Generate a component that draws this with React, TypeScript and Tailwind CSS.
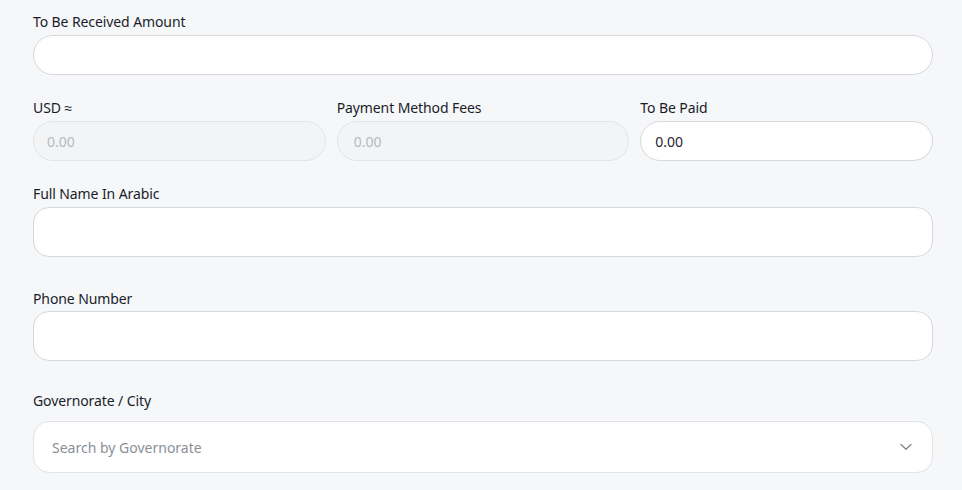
import React from "react";

const font = { fontFamily: '"Noto Sans", "Liberation Sans", sans-serif' };

function Label({ children }: { children: React.ReactNode }) {
  return (
    <label className="block h-5 overflow-visible text-[14px] leading-[22px] font-normal text-[#1a1d29] tracking-[-0.1px]">
      {children}
    </label>
  );
}

export default function App() {
  return (
    <div
      className="min-h-[490px] w-full bg-[#f6f7f9] pl-[33px] pr-[29px] pt-[11px]"
      style={font}
    >
      <div className="flex flex-col">
        {/* Amount to receive */}
        <div>
          <Label>To Be Received Amount</Label>
          <input
            className="mt-1 h-10 w-full rounded-[20px] border border-[#d5d7dc] bg-white px-[14px] text-[14px] outline-none"
            type="text"
          />
        </div>

        {/* Conversion row */}
        <div className="mt-[22px] grid grid-cols-3 gap-x-[11px]">
          <div>
            <Label>USD ≈</Label>
            <input
              disabled
              placeholder="0.00"
              className="mt-1 h-10 w-full rounded-[20px] border border-[#e3e4e8] bg-[#f3f4f6] px-[13px] text-[14px] text-[#b6b9be] placeholder-[#b6b9be] outline-none"
            />
          </div>
          <div>
            <Label>Payment Method Fees</Label>
            <input
              disabled
              placeholder="0.00"
              className="mt-1 h-10 w-full rounded-[20px] border border-[#e3e4e8] bg-[#f3f4f6] px-[16px] text-[14px] text-[#b6b9be] placeholder-[#b6b9be] outline-none"
            />
          </div>
          <div>
            <Label>To Be Paid</Label>
            <input
              defaultValue="0.00"
              className="mt-1 h-10 w-full rounded-[20px] border border-[#d5d7dc] bg-white px-[14px] text-[14px] text-[#1f2230] outline-none"
            />
          </div>
        </div>

        {/* Full name */}
        <div className="mt-[22px]">
          <Label>Full Name In Arabic</Label>
          <input
            className="mt-1 h-[50px] w-full rounded-2xl border border-[#d5d7dc] bg-white px-4 text-[14px] outline-none"
            type="text"
          />
        </div>

        {/* Phone */}
        <div className="mt-[31px]">
          <Label>Phone Number</Label>
          <input
            className="mt-[3px] h-[50px] w-full rounded-2xl border border-[#d5d7dc] bg-white px-4 text-[14px] outline-none"
            type="tel"
          />
        </div>

        {/* Governorate select */}
        <div className="mt-[29px]">
          <Label>Governorate / City</Label>
          <div className="mt-[11px] flex h-[52px] w-full items-center justify-between rounded-2xl border border-[#e1e2e6] bg-white pl-[18px] pr-[20px]">
            <span className="text-[14px] text-[#8a8f98]">Search by Governorate</span>
            <svg width="12" height="8" viewBox="0 0 12 8" fill="none">
              <path
                d="M1 1.5L6 6.2L11 1.5"
                stroke="#80858f"
                strokeWidth="1.3"
                strokeLinecap="round"
                strokeLinejoin="round"
              />
            </svg>
          </div>
        </div>
      </div>
    </div>
  );
}
